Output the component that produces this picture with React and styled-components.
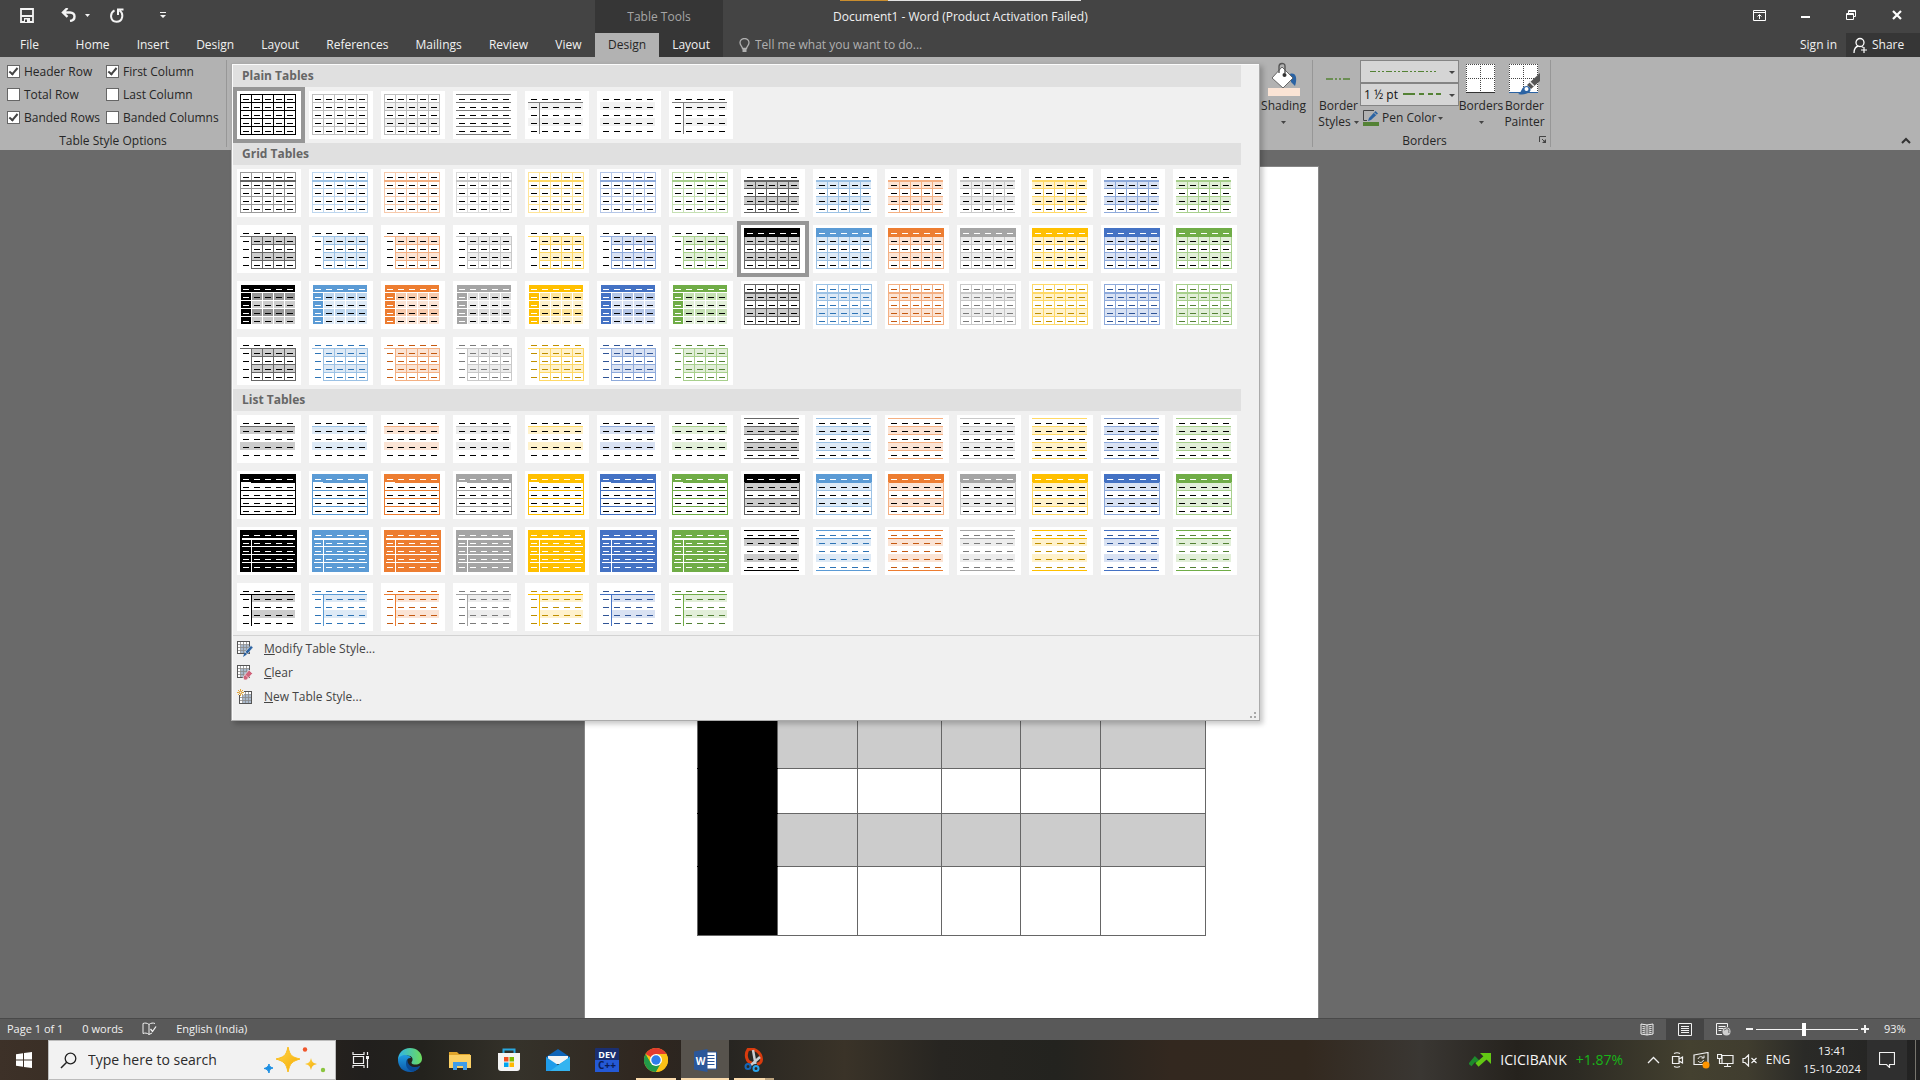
import React from "react";
import styled, { createGlobalStyle, css } from "styled-components";

const GlobalStyle = createGlobalStyle`
  *, *::before, *::after { box-sizing: border-box; }
  html, body { margin: 0; height: 100%; }
  body {
    font-family: "Open Sans", "Noto Sans", sans-serif;
    font-size: 12px;
    line-height: 16px;
    overflow: hidden;
  }
  button, input, select {
    font: inherit;
    color: inherit;
    margin: 0;
    padding: 0;
    border: 0;
    background: none;
    border-radius: 0;
  }
  svg { display: block; flex: none; }
`;

const Window = styled.div`
  display: flex;
  flex-direction: column;
  height: 100vh;
  background: #6a6a6a;
`;

/* ---------- title bar and tabs ---------- */

const TitleBar = styled.header`
  display: flex;
  flex: none;
  background: #444444;
  color: #f1f1f1;
`;

const TitleColumn = styled.div`
  display: flex;
  flex-direction: column;
  flex: ${(p) => (p.$w ? `0 0 ${p.$w}px` : "1")};
  background: ${(p) => (p.$dark ? "#363636" : "transparent")};
`;

const CaptionRow = styled.div`
  display: flex;
  align-items: center;
  height: 33px;
  padding-bottom: 3px;
`;

const TabRow = styled.nav`
  display: flex;
  align-items: stretch;
  height: 24px;
`;

const QuickButton = styled.button`
  display: flex;
  align-items: center;
  justify-content: center;
  gap: 8px;
  width: ${(p) => p.$w || 39}px;
  height: 30px;
`;

const QuickAccess = styled(CaptionRow)`
  padding-left: 8px;
`;

const Tab = styled.button`
  flex: 1 1 auto;
  padding: 0 13px;
  white-space: nowrap;
  font-size: 12px;
  color: ${(p) => (p.$active ? "#262626" : "#f1f1f1")};
  background: ${(p) => (p.$active ? "#b2b2b2" : "transparent")};
`;

const FileTab = styled(Tab)`
  flex: none;
  width: 62px;
  padding: 0 20px;
  text-align: left;
`;

const ToolsTitle = styled(CaptionRow)`
  justify-content: center;
  padding-bottom: 0;
  color: #a6a6a6;
`;

const DocTitle = styled.h1`
  margin: 0 auto 0 110px;
  padding-top: 3px;
  font-size: 12px;
  font-weight: 400;
  line-height: 16px;
  white-space: nowrap;
`;

const Progress = styled.div`
  position: absolute;
  top: 0;
  left: 840px;
  width: 241px;
  height: 1px;
  background: linear-gradient(90deg, #c98d2e 48px, #e2e2e2 48px);
`;

const WindowButton = styled.button`
  display: flex;
  align-items: center;
  justify-content: center;
  width: 46px;
  height: 30px;
`;

const TellMe = styled.label`
  display: flex;
  align-items: center;
  gap: 5px;
  margin-right: auto;
  padding-left: 16px;
`;

const TellInput = styled.input`
  width: 240px;
  outline: 0;
  &::placeholder { color: #b0b0b0; opacity: 1; }
`;

const SignIn = styled.a`
  align-self: center;
  margin-right: 9px;
  color: inherit;
  text-decoration: none;
`;

const Share = styled.button`
  display: flex;
  align-items: center;
  gap: 4px;
  width: 74px;
  padding-left: 7px;
  background: #363636;
`;

/* ---------- ribbon ---------- */

const Ribbon = styled.section`
  display: flex;
  flex: none;
  height: 93px;
  padding: 3px 0;
  background: #b2b2b2;
  color: #262626;
`;

const Group = styled.div`
  display: flex;
  flex-direction: column;
  flex: none;
  width: ${(p) => p.$w}px;
  border-right: 1px solid #979797;
`;

const GroupLabel = styled.div`
  position: relative;
  margin-top: auto;
  padding-right: ${(p) => (p.$launcher ? 14 : 0)}px;
  text-align: center;
  line-height: 12px;
`;

const OptionGrid = styled.div`
  display: grid;
  grid-template-columns: 99px auto;
  grid-auto-rows: 23px;
  justify-content: start;
  padding-left: 7px;
`;

const OptionLabel = styled.label`
  display: flex;
  align-items: center;
  gap: 4px;
  white-space: nowrap;
`;

const CheckBox = styled.input`
  appearance: none;
  display: grid;
  place-items: center;
  flex: none;
  width: 13px;
  height: 13px;
  border: 1px solid #666666;
  background: #ffffff;
  &:checked::after {
    content: "";
    width: 5px;
    height: 9px;
    margin-bottom: 3px;
    border: solid #444444;
    border-width: 0 2px 2px 0;
    transform: rotate(40deg);
  }
`;

const GallerySlot = styled.div`
  position: relative;
  flex: none;
  width: 1033px;
`;

const BigButton = styled.button`
  display: flex;
  flex-direction: column;
  align-items: center;
  width: ${(p) => p.$w}px;
  padding-left: ${(p) => p.$inset || 0}px;
  white-space: nowrap;
`;

const BigIcon = styled.span`
  display: flex;
  align-items: center;
  justify-content: center;
  height: 38px;
`;

const Line = styled.span`
  display: flex;
  align-items: center;
  justify-content: center;
  gap: 3px;
  height: 16px;
`;

const GroupBody = styled.div`
  display: flex;
`;

const PenColumn = styled.div`
  display: flex;
  flex-direction: column;
  width: 99px;
  margin-right: 3px;
`;

const Combo = styled.div`
  display: grid;
  height: 23px;
  border: 1px solid #848484;
  background: #d5d5d5;
  color: #111111;
  & > * { grid-area: 1 / 1; }
  & > svg { pointer-events: none; }
`;

const ComboSelect = styled.select`
  appearance: none;
  width: 100%;
  padding-left: 3px;
  outline: 0;
`;

const PenButton = styled.button`
  display: flex;
  align-items: center;
  gap: 2px;
  height: 24px;
  padding-left: 3px;
  white-space: nowrap;
`;

const Launcher = styled.button`
  position: absolute;
  right: 3px;
  top: 1px;
`;

const Collapse = styled.button`
  align-self: flex-end;
  margin: 0 9px 0 auto;
  height: 14px;
`;

/* ---------- table style gallery ---------- */

const Gallery = styled.div`
  position: absolute;
  z-index: 2;
  top: 3px;
  left: 4px;
  width: 1029px;
  padding: 1px 0 11px 1px;
  border: 1px solid #ababab;
  background: #f0f0f0;
  box-shadow: inset 1px 1px 0 #fbfbfb, 3px 3px 5px rgba(0, 0, 0, 0.22);
  color: #444444;
`;

const GalleryHeading = styled.h2`
  width: 1008px;
  height: 22px;
  margin: 0;
  padding-left: 9px;
  background: #e0e0e0;
  color: #666666;
  font-size: 12px;
  font-weight: 700;
  line-height: 21px;
`;

const Swatches = styled.div`
  display: grid;
  grid-template-columns: repeat(14, 72px);
  grid-auto-rows: 56px;
`;

const Swatch = styled.button`
  border: 4px solid ${(p) => (p.$selected ? "#969696" : "transparent")};
  background: #ffffff padding-box;
`;

const MenuList = styled.ul`
  margin: 0;
  padding: 1px 0 0;
  border-top: 1px solid #d2d2d2;
  list-style: none;
`;

const MenuItem = styled.button`
  display: flex;
  align-items: center;
  gap: 11px;
  width: 100%;
  height: 24px;
  padding-left: 4px;
  text-align: left;
`;

const Grip = styled.span`
  position: absolute;
  right: 3px;
  bottom: 2px;
`;

/* ---------- document ---------- */

const Canvas = styled.main`
  display: flex;
  flex: 1;
  justify-content: center;
  min-height: 0;
  padding: 16px 18px 0 0;
  overflow: hidden;
`;

const Page = styled.article`
  width: 735px;
  padding: 103px 0 0 112px;
  border: 1px solid #868686;
  border-bottom: 0;
  background: #ffffff;
`;

const DocTable = styled.table`
  width: 509px;
  table-layout: fixed;
  border-collapse: collapse;
`;

const Cell = styled.td`
  padding: 0;
  border: 1px solid #666666;
  background: ${(p) => (p.$band ? "#cccccc" : "#ffffff")};
`;

const HeadCell = styled.th`
  padding: 0;
  border: 1px solid #666666;
  border-top-color: #000000;
  border-bottom-color: ${(p) => (p.$last ? "#666666" : "#000000")};
  background: #000000;
`;

const Row = styled.tr`
  height: ${(p) => p.$h}px;
`;

/* ---------- status bar ---------- */

const StatusBar = styled.footer`
  display: flex;
  align-items: center;
  flex: none;
  height: 22px;
  padding: 0 0 1px 7px;
  border-top: 1px solid #494949;
  background: #595959;
  color: #f1f1f1;
  font-size: 11px;
`;

const StatusItem = styled.button`
  flex: none;
  margin-right: ${(p) => (p.$last ? "auto" : "19px")};
  white-space: nowrap;
`;

const ViewButton = styled.button`
  display: flex;
  align-items: center;
  justify-content: center;
  width: 38px;
  height: 21px;
  background: ${(p) => (p.$active ? "#444444" : "transparent")};
`;

const ZoomGroup = styled.div`
  display: flex;
  align-items: center;
  gap: 3px;
  margin-left: 4px;
`;

const ZoomRange = styled.input`
  appearance: none;
  width: 102px;
  height: 13px;
  background: linear-gradient(#f1f1f1, #f1f1f1) center / 100% 1px no-repeat;
  &::-webkit-slider-thumb {
    appearance: none;
    width: 4px;
    height: 13px;
    background: #ffffff;
  }
`;

const ZoomValue = styled.button`
  width: 24px;
  margin: 0 12px 0 15px;
  text-align: left;
`;

/* ---------- taskbar ---------- */

const Taskbar = styled.nav`
  display: flex;
  align-items: stretch;
  flex: none;
  height: 40px;
  color: #f6f6f6;
  background: linear-gradient(90deg, #3d3128 0%, #33291f 10%, #211f1d 19%, #23221d 22%, #35322a 27%, #2f261f 34%, #272521 38%, #3a3328 44%, #272521 49%, #23231f 55%, #33281f 61%, #33291f 68%, #3a3733 74%, #25221d 79%, #2c2a23 82%, #444130 88%, #403d2f 91%, #2a2a27 94%, #222222 100%);
`;

const TaskButton = styled.button`
  position: relative;
  display: flex;
  align-items: center;
  justify-content: center;
  width: ${(p) => p.$w || 49}px;
  background: ${(p) => (p.$active ? "#57534d" : "transparent")};
  ${(p) =>
    p.$running &&
    css`
      &::after {
        content: "";
        position: absolute;
        left: ${p.$active ? 0 : 5}px;
        right: ${p.$active ? 0 : 5}px;
        bottom: 0;
        height: 2px;
        background: ${p.$stacked ? "linear-gradient(90deg, #fbdcae 31px, #bca37e 31px)" : "#fbdcae"};
      }
    `}
`;

const SearchBox = styled.label`
  display: flex;
  align-items: center;
  gap: 11px;
  width: 288px;
  padding: 0 9px 0 11px;
  border: 1px solid #bcbcbc;
  background: #f2f2f2;
  color: #222222;
`;

const SearchInput = styled.input`
  flex: 1;
  min-width: 0;
  font-size: 14px;
  line-height: 20px;
  outline: 0;
  &::placeholder { color: #2b2b2b; opacity: 1; }
`;

const Tray = styled.div`
  display: flex;
  align-items: center;
  margin-left: auto;
`;

const Stock = styled.button`
  display: flex;
  align-items: center;
  gap: 9px;
  margin-right: 18px;
  font-size: 14px;
`;

const Gain = styled.span`
  color: #18b418;
`;

const TrayButton = styled.button`
  display: flex;
  align-items: center;
  justify-content: center;
  width: 24px;
  height: 40px;
`;

const Language = styled.button`
  width: 34px;
  height: 40px;
`;

const Clock = styled.button`
  display: flex;
  flex-direction: column;
  align-items: center;
  gap: 2px;
  width: 70px;
  margin-left: 2px;
  font-size: 11px;
`;

const Notify = styled(TrayButton)`
  width: 40px;
  background: #2f2f2f;
`;

const ShowDesktop = styled.button`
  width: 5px;
  height: 40px;
  margin-left: 8px;
  border-left: 1px solid #77756e;
`;

/* ---------- gallery drawings ---------- */

const THEMES = [
  { name: "Dark", strong: "#000000", mid: "#666666", light: "#999999", pale: "#cccccc", ink: "#000000" },
  { name: "Accent 1", strong: "#5b9bd5", mid: "#9cc2e5", light: "#bdd6ee", pale: "#deeaf6", ink: "#2e74b5" },
  { name: "Accent 2", strong: "#ed7d31", mid: "#f4b083", light: "#f7caac", pale: "#fbe4d5", ink: "#c45911" },
  { name: "Accent 3", strong: "#a5a5a5", mid: "#c9c9c9", light: "#dbdbdb", pale: "#ededed", ink: "#7b7b7b" },
  { name: "Accent 4", strong: "#ffc000", mid: "#ffd966", light: "#ffe599", pale: "#fff2cc", ink: "#bf8f00" },
  { name: "Accent 5", strong: "#4472c4", mid: "#8eaadb", light: "#b4c6e7", pale: "#d9e2f3", ink: "#2f5496" },
  { name: "Accent 6", strong: "#70ad47", mid: "#a8d08d", light: "#c5e0b3", pale: "#e2efd9", ink: "#538135" },
];

const XS = [3, 14, 25, 36, 47, 58];
const YS = [3, 11, 19, 27, 35, 43];
const r = (x, y, w, h, fill) => ({ x, y, w, h, fill });
const hLines = (ys, x, w, c) => ys.map((y) => r(x, y, w, 1, c));
const vLines = (xs, y, h, c) => xs.map((x) => r(x, y, 1, h, c));
const bands = (x, c) => [11, 27].map((y) => r(x, y, 58 - x, 8, c));
const grid = (c) => [...hLines(YS, 3, 56, c), ...vLines(XS, 3, 41, c)];
const innerGrid = (t) => [
  ...bands(14, t.pale),
  ...hLines([11], 3, 12, t.mid),
  ...hLines(YS.slice(1), 14, 45, t.mid),
  ...vLines(XS.slice(1), 11, 33, t.mid),
];

const BLACK = "#000000";
const WHITE = "#ffffff";
const allBlack = () => BLACK;

const STYLES = {
  grid1: { shapes: (t) => [...grid(t.light), r(3, 11, 56, 2, t.mid)] },
  grid2: {
    shapes: (t) => [
      ...bands(3, t.pale),
      ...hLines(YS.slice(2), 3, 55, t.mid),
      ...vLines(XS.slice(1, 5), 11, 33, t.mid),
      r(3, 11, 55, 2, t.mid),
    ],
  },
  grid3: { shapes: innerGrid },
  grid4: {
    shapes: (t) => [...bands(3, t.pale), ...grid(t.mid), r(3, 3, 56, 9, t.strong)],
    ink: (t, row) => (row === 0 ? WHITE : BLACK),
  },
  grid5: {
    shapes: (t) => [
      r(4, 4, 54, 7, t.strong),
      ...YS.slice(1, 5).flatMap((y, i) =>
        XS.slice(0, 5).map((x, c) => r(x + 1, y + 1, 10, 7, c === 0 ? t.strong : i % 2 ? t.pale : t.light))
      ),
    ],
    ink: (t, row, col) => (row === 0 || col === 0 ? WHITE : BLACK),
  },
  grid6: {
    shapes: (t) => [...bands(3, t.pale), ...grid(t.mid), r(3, 11, 56, 2, t.mid)],
    ink: (t) => t.ink,
  },
  grid7: { shapes: innerGrid, ink: (t) => t.ink },
  list1: { shapes: (t) => [...bands(3, t.pale), r(3, 11, 55, 1, t.mid)] },
  list2: { shapes: (t) => [...bands(3, t.pale), ...hLines(YS, 3, 55, t.mid)] },
  list3: {
    shapes: (t) => [
      ...hLines(YS, 3, 56, t.strong),
      ...vLines([3, 58], 3, 41, t.strong),
      r(3, 3, 56, 9, t.strong),
      r(4, 11, 10, 1, WHITE),
    ],
    ink: (t, row) => (row === 0 ? WHITE : BLACK),
  },
  list4: {
    shapes: (t) => [
      ...bands(3, t.pale),
      ...hLines(YS, 3, 56, t.mid),
      ...vLines([3, 58], 3, 41, t.mid),
      r(3, 3, 56, 8, t.strong),
      r(4, 11, 54, 1, t.strong),
    ],
    ink: (t, row) => (row === 0 ? WHITE : BLACK),
  },
  list5: {
    shapes: (t) => [
      r(3, 3, 57, 42, t.strong),
      r(5, 11, 53, 2, WHITE),
      ...hLines([19, 27, 35], 5, 53, WHITE),
      r(14, 13, 1, 32, WHITE),
    ],
    ink: () => WHITE,
  },
  list6: {
    shapes: (t) => [...bands(3, t.pale), ...hLines([3, 11, 43], 3, 55, t.strong)],
    ink: (t) => t.ink,
  },
  list7: {
    shapes: (t) => [...bands(14, t.pale), r(3, 11, 55, 1, t.strong), r(14, 11, 1, 32, t.strong)],
    ink: (t) => t.ink,
  },
};

const GRAY = "#7f7f7f";
const PLAIN = [
  { name: "Table Grid", shapes: grid(BLACK), selected: true },
  { name: "Table Grid Light", shapes: grid("#bfbfbf") },
  { name: "Plain Table 1", shapes: [...bands(3, "#f2f2f2"), ...grid("#bfbfbf")] },
  { name: "Plain Table 2", shapes: hLines(YS, 3, 55, GRAY) },
  { name: "Plain Table 3", shapes: [...bands(3, "#f2f2f2"), r(3, 11, 55, 1, GRAY), r(14, 11, 1, 32, GRAY)] },
  { name: "Plain Table 4", shapes: bands(3, "#f2f2f2") },
  { name: "Plain Table 5", shapes: [...bands(14, "#f2f2f2"), r(3, 11, 55, 1, GRAY), r(14, 11, 1, 32, GRAY)] },
];

const ROWS = [0, 1, 2, 3, 4];

function Thumb({ shapes, ink = allBlack, theme }) {
  return (
    <svg width="64" height="48" shapeRendering="crispEdges" aria-hidden="true">
      {shapes.map((s, i) => (
        <rect key={i} x={s.x} y={s.y} width={s.w} height={s.h} fill={s.fill} />
      ))}
      {ROWS.map((row) =>
        ROWS.map((col) => (
          <rect key={`${row}-${col}`} x={6 + col * 11} y={8 + row * 8} width="6" height="1" fill={ink(theme, row, col)} />
        ))
      )}
    </svg>
  );
}

function StyleGroup({ title, kinds, selected }) {
  return (
    <>
      <GalleryHeading>{title}</GalleryHeading>
      <Swatches>
        {kinds.map((kind) =>
          THEMES.map((theme) => {
            const id = `${kind} ${theme.name}`;
            const style = STYLES[kind];
            return (
              <Swatch key={id} aria-label={id} $selected={id === selected}>
                <Thumb shapes={style.shapes(theme)} ink={style.ink} theme={theme} />
              </Swatch>
            );
          })
        )}
      </Swatches>
    </>
  );
}

/* ---------- small icons ---------- */

const Caret = ({ color = "#444444" }) => (
  <svg width="5" height="3"><path d="M0 0h5L2.5 3z" fill={color} /></svg>
);

const GridIcon = ({ children }) => (
  <svg width="16" height="16" viewBox="0 0 16 16">
    <rect x="0.5" y="0.5" width="12" height="12" fill="#fff" stroke="#555" />
    <path d="M4 4h8v8H4z" fill="#a9b9cc" />
    <path d="M1 3.500h11M1 6.500h11M1 9.500h11M3.500 1v11M6.500 1v11M9.500 1v11" stroke="#8a8a8a" strokeWidth="0.8" />
    {children}
  </svg>
);

const MENU = [
  {
    key: "M",
    rest: "odify Table Style...",
    icon: <GridIcon><path d="M14 4.500 16 6.500 10.500 13 8 11z" fill="#2b63a3" stroke="#f0f0f0" strokeWidth="0.6" /><path d="M7.500 11.500 9.800 13.500 6 16z" fill="#2b63a3" /></GridIcon>,
  },
  {
    key: "C",
    rest: "lear",
    icon: <GridIcon><path d="M12 5 15.500 8.500 9.500 15 7 15 6 12z" fill="#d0647c" stroke="#f0f0f0" strokeWidth="0.7" /><path d="m8 9.500 4 4" stroke="#f0d0d6" strokeWidth="0.8" /></GridIcon>,
  },
  {
    key: "N",
    rest: "ew Table Style...",
    icon: (
      <svg width="16" height="16" viewBox="0 0 16 16">
        <rect x="2.500" y="2.500" width="12" height="12" fill="#fff" stroke="#555" />
        <path d="M6 6h8v8H6z" fill="#a9b9cc" />
        <path d="M3 5.500h11M3 8.500h11M3 11.500h11M5.500 3v11M8.500 3v11M11.500 3v11" stroke="#8a8a8a" strokeWidth="0.8" />
        <path d="M0 0h7v6H0z" fill="#f0f0f0" />
        <path d="M3.500 0v7M0 3.500h7M1 1l5 5M6 1 1 6" stroke="#e0a53c" strokeWidth="1" />
        <circle cx="3.500" cy="3.500" r="1.300" fill="#f0f0f0" stroke="#e0a53c" />
      </svg>
    ),
  },
];

const OPTIONS = [
  ["Header Row", true],
  ["First Column", true],
  ["Total Row", false],
  ["Last Column", false],
  ["Banded Rows", true],
  ["Banded Columns", false],
];

const TABS = ["Home", "Insert", "Design", "Layout", "References", "Mailings", "Review", "View"];

const DOC_ROWS = [45, 45, 45, 45, 45, 45, 45, 45, 45, 45, 48, 45, 53, 69];
const DOC_COLS = [80, 80, 84, 79, 80, 105];

function Header() {
  return (
    <TitleBar>
      <TitleColumn $w={595}>
        <QuickAccess>
          <QuickButton $w={38} aria-label="Save">
            <svg width="14" height="15"><path d="M1 1h12v13H1zM1 8h12" fill="none" stroke="#f4f4f4" strokeWidth="1.800" /><path d="M4 10h6v4H4z" fill="#f4f4f4" /><path d="M5 11.500h2V14H5z" fill="#444" /></svg>
          </QuickButton>
          <QuickButton $w={58} aria-label="Undo">
            <svg width="16" height="14"><path d="M6.500 0 2 4.500l4.500 4.300M2.500 4.500H9c6 0 6 7.500 0 8.500" fill="none" stroke="#f4f4f4" strokeWidth="2.400" /></svg>
            <Caret color="#f4f4f4" />
          </QuickButton>
          <QuickButton $w={26} aria-label="Redo">
            <svg width="14" height="15"><path d="M4.500 2.300C-.5 5-.2 13.500 6.500 13.800c6.500 0 7.500-8.300 3-11.300M8 7V1.500h5.500" fill="none" stroke="#f4f4f4" strokeWidth="2" /></svg>
          </QuickButton>
          <QuickButton $w={66} aria-label="Customize Quick Access Toolbar">
            <svg width="6" height="7"><path d="M0 0h6v1H0zM0 3h6L3 6z" fill="#f4f4f4" /></svg>
          </QuickButton>
        </QuickAccess>
        <TabRow>
          <FileTab>File</FileTab>
          {TABS.map((t) => <Tab key={t}>{t}</Tab>)}
        </TabRow>
      </TitleColumn>
      <TitleColumn $w={128} $dark>
        <ToolsTitle>Table Tools</ToolsTitle>
        <TabRow>
          <Tab $active>Design</Tab>
          <Tab>Layout</Tab>
        </TabRow>
      </TitleColumn>
      <TitleColumn>
        <CaptionRow>
          <DocTitle>Document1 - Word (Product Activation Failed)</DocTitle>
          <WindowButton aria-label="Ribbon Display Options">
            <svg width="13" height="11"><path d="M.5.5h12v10H.5zM.5 2.500h12" fill="none" stroke="#fff" /><path d="M6.500 9V5M4.500 6.500l2-2 2 2" fill="none" stroke="#fff" /></svg>
          </WindowButton>
          <WindowButton aria-label="Minimize"><svg width="9" height="6"><path d="M0 4h9v2H0z" fill="#fff" /></svg></WindowButton>
          <WindowButton aria-label="Restore">
            <svg width="10" height="10"><path d="M.5 3.500h7v6h-7zM.5 4.500h7M2.500 3V.5h7v6H8M2.500 1.500h7" fill="none" stroke="#fff" /></svg>
          </WindowButton>
          <WindowButton aria-label="Close"><svg width="10" height="10"><path d="m1 1 8 8M9 1 1 9" stroke="#fff" strokeWidth="2.200" /></svg></WindowButton>
        </CaptionRow>
        <TabRow>
          <TellMe>
            <svg width="11" height="15"><path d="M3.500 10.500C3.500 8.500 1 7.500 1 4.800a4.500 4.300 0 0 1 9 0c0 2.700-2.500 3.700-2.500 5.700z" fill="none" stroke="#b0b0b0" strokeWidth="1.300" /><path d="M3.500 11h4v3h-4z" fill="#b0b0b0" /></svg>
            <TellInput aria-label="Tell me" placeholder="Tell me what you want to do..." />
          </TellMe>
          <SignIn href="#signin">Sign in</SignIn>
          <Share>
            <svg width="15" height="17"><circle cx="7" cy="5.500" r="4" fill="none" stroke="#fff" strokeWidth="1.300" /><path d="M1 16c0-4 2-6.500 4.500-7M8.500 9.500l2 1" fill="none" stroke="#fff" strokeWidth="1.300" /><path d="M11 10v6M8 13h6" stroke="#fff" strokeWidth="1.200" /></svg>
            Share
          </Share>
        </TabRow>
      </TitleColumn>
      <Progress />
    </TitleBar>
  );
}

function StyleGallery() {
  return (
    <Gallery>
      <GalleryHeading>Plain Tables</GalleryHeading>
      <Swatches>
        {PLAIN.map((p) => (
          <Swatch key={p.name} aria-label={p.name} $selected={p.selected}><Thumb shapes={p.shapes} /></Swatch>
        ))}
      </Swatches>
      <StyleGroup title="Grid Tables" kinds={["grid1", "grid2", "grid3", "grid4", "grid5", "grid6", "grid7"]} selected="grid4 Dark" />
      <StyleGroup title="List Tables" kinds={["list1", "list2", "list3", "list4", "list5", "list6", "list7"]} />
      <MenuList>
        {MENU.map((m) => (
          <li key={m.key}>
            <MenuItem>{m.icon}<span><u>{m.key}</u>{m.rest}</span></MenuItem>
          </li>
        ))}
      </MenuList>
      <Grip><svg width="6" height="6"><path d="M4 0h2v2H4zM0 4h2v2H0zM4 4h2v2H4z" fill="#a8a8a8" /></svg></Grip>
    </Gallery>
  );
}

const BorderSheet = ({ children, w = 30 }) => (
  <svg width={w} height="32">
    <path d="M0 1h29v28H0z" fill="#fff" />
    <path d="M0 1.500h29M0 15.500h29M.5 1v28M14.500 1v28M28.500 1v28" stroke="#444" strokeDasharray="1 1" />
    {children || <path d="M0 29.500h29" stroke="#333" />}
  </svg>
);

function RibbonBar() {
  return (
    <Ribbon>
      <Group $w={227}>
        <OptionGrid>
          {OPTIONS.map(([label, on]) => (
            <OptionLabel key={label}><CheckBox type="checkbox" defaultChecked={on} />{label}</OptionLabel>
          ))}
        </OptionGrid>
        <GroupLabel>Table Style Options</GroupLabel>
      </Group>
      <GallerySlot><StyleGallery /></GallerySlot>
      <Group $w={53}>
        <BigButton $w={47}>
          <BigIcon>
            <svg width="34" height="34" viewBox="0 0 34 34">
              <path d="M23 12c5-2 8 3 5 12l-4-4z" fill="#2b63a3" />
              <path d="m15 5 11 11-10 10L5 16z" fill="#fff" stroke="#666" />
              <path d="M12 11V4.500C12 .5 18 .5 18 4v7" fill="none" stroke="#555" strokeWidth="1.400" />
              <circle cx="17.500" cy="13" r="2" fill="#333" />
              <path d="M1 26h32v8H1z" fill="#fbe4d5" />
            </svg>
          </BigIcon>
          <Line>Shading</Line>
          <Line><Caret /></Line>
        </BigButton>
      </Group>
      <Group $w={238}>
        <GroupBody>
          <BigButton $w={47} $inset={4}>
            <BigIcon><svg width="26" height="2"><path d="M0 1h26" stroke="#548235" strokeWidth="1.500" strokeDasharray="7 2 2 2 2 2" /></svg></BigIcon>
            <Line>Border</Line>
            <Line>Styles<Caret /></Line>
          </BigButton>
          <PenColumn>
            <Combo>
              <ComboSelect aria-label="Line style"><option aria-label="Dash dot dot" /></ComboSelect>
              <svg width="97" height="21"><path d="M9 10.500h66" stroke="#548235" strokeWidth="1" strokeDasharray="6 2 2 2 2 2" /><path d="M88 10h6l-3 3z" fill="#444" /></svg>
            </Combo>
            <Combo>
              <ComboSelect aria-label="Line weight"><option>1 ½ pt</option></ComboSelect>
              <svg width="97" height="21"><path d="M42 10h12M58 10h5M67 10h5M75 10h5" stroke="#548235" strokeWidth="2" /><path d="M88 10h6l-3 3z" fill="#444" /></svg>
            </Combo>
            <PenButton>
              <svg width="17" height="16"><path d="M11 .5H.5v10H4" fill="none" stroke="#444" /><path d="M12.500 1 15 3.500 8 10l-3 1 1-3z" fill="#2b63a3" /><path d="m11 2.500 2.500 2.500" stroke="#b2b2b2" /><path d="M0 12h16v4H0z" fill="#548235" /></svg>
              Pen Color<Caret />
            </PenButton>
          </PenColumn>
          <BigButton $w={38}>
            <BigIcon><BorderSheet /></BigIcon>
            <Line>Borders</Line>
            <Line><Caret /></Line>
          </BigButton>
          <BigButton $w={49}>
            <BigIcon>
              <BorderSheet w={32}>
                <path d="M0 29.500h29" stroke="#2b63a3" />
                <path d="M31 10v8l-9 8-4-4z" fill="#555" />
                <path d="m20 18 5 5" stroke="#e8e8e8" strokeWidth="1.500" />
                <path d="M9 31c4-1 3-8 9-8 4 1 5 5 1 7-3 1.500-6 2-10 1z" fill="#2b63a3" />
                <circle cx="17.500" cy="26" r="2" fill="#fff" />
              </BorderSheet>
            </BigIcon>
            <Line>Border</Line>
            <Line>Painter</Line>
          </BigButton>
        </GroupBody>
        <GroupLabel $launcher>
          Borders
          <Launcher aria-label="Borders and Shading">
            <svg width="8" height="8"><path d="M.5 6V.5H7M3 3l3 3" fill="none" stroke="#444" /><path d="M7 3v4H3z" fill="#444" /></svg>
          </Launcher>
        </GroupLabel>
      </Group>
      <Collapse aria-label="Collapse the Ribbon"><svg width="10" height="7"><path d="m1 6 4-4 4 4" fill="none" stroke="#333" strokeWidth="2" /></svg></Collapse>
    </Ribbon>
  );
}

function Document() {
  return (
    <Canvas>
      <Page>
        <DocTable>
          <colgroup>{DOC_COLS.map((w, i) => <col key={i} style={{ width: w }} />)}</colgroup>
          <tbody>
            {DOC_ROWS.map((h, i) => (
              <Row key={i} $h={h}>
                <HeadCell scope="row" $last={i === DOC_ROWS.length - 1} />
                {DOC_COLS.slice(1).map((_, c) => <Cell key={c} $band={i % 2 === 0} />)}
              </Row>
            ))}
          </tbody>
        </DocTable>
      </Page>
    </Canvas>
  );
}

function Status() {
  return (
    <StatusBar>
      <StatusItem>Page 1 of 1</StatusItem>
      <StatusItem>0 words</StatusItem>
      <StatusItem aria-label="Proofing">
        <svg width="15" height="14"><path d="M7 2.500C5 .8 3 .8 1 1.500v10c2-.7 4-.7 6 1zM7 2.500C9 .8 11 .8 13 1.500M7 12.500l3-1.500" fill="none" stroke="#f1f1f1" /><path d="m8.500 7 2 2.500L14 4.500" fill="none" stroke="#f1f1f1" strokeWidth="1.300" /></svg>
      </StatusItem>
      <StatusItem $last>English (India)</StatusItem>
      <ViewButton aria-label="Read Mode">
        <svg width="14" height="13"><path d="M7 2 1 1v10l6 1 6-1V1zM7 2v10M2.500 3.500l3 .5M2.500 5.500l3 .5M2.500 7.500l3 .5M2.500 9.500l3 .5M11.500 3.500l-3 .5M11.500 5.500l-3 .5M11.500 7.500l-3 .5M11.500 9.500l-3 .5" fill="none" stroke="#f1f1f1" /></svg>
      </ViewButton>
      <ViewButton $active aria-label="Print Layout">
        <svg width="14" height="13"><path d="M.5.5h13v12H.5zM3 3.500h8M3 5.500h8M3 7.500h8M3 9.500h8" fill="none" stroke="#f1f1f1" /></svg>
      </ViewButton>
      <ViewButton aria-label="Web Layout">
        <svg width="15" height="13"><path d="M6 11.500H.5V.5h11V4M2.500 3.500h7M2.500 5.500h5M2.500 7.500h3" fill="none" stroke="#f1f1f1" /><circle cx="10.500" cy="8.500" r="4" fill="#cfcfcf" /><path d="M8 7c2 0 2-2 4-1s0 2 1 4" fill="none" stroke="#666" /></svg>
      </ViewButton>
      <ZoomGroup>
        <button aria-label="Zoom Out"><svg width="7" height="8"><path d="M0 3h7v2H0z" fill="#f1f1f1" /></svg></button>
        <ZoomRange type="range" min="10" max="190" defaultValue="94" aria-label="Zoom" />
        <button aria-label="Zoom In"><svg width="8" height="8"><path d="M0 3h8v2H0zM3 0h2v8H3z" fill="#f1f1f1" /></svg></button>
      </ZoomGroup>
      <ZoomValue>93%</ZoomValue>
    </StatusBar>
  );
}

function TaskbarRow() {
  return (
    <Taskbar>
      <TaskButton $w={48} aria-label="Start">
        <svg width="16" height="16"><path d="M0 2.300 7 1.300v6.200H0zM8 1.100 16 0v7.500H8zM0 8.500h7v6.200l-7-1zM8 8.500h8V16l-8-1.100z" fill="#fff" /></svg>
      </TaskButton>
      <SearchBox>
        <svg width="17" height="17"><circle cx="10.500" cy="6.500" r="5.300" fill="none" stroke="#222" strokeWidth="1.300" /><path d="M6.700 10.300 1 16" stroke="#222" strokeWidth="1.500" /></svg>
        <SearchInput aria-label="Search" placeholder="Type here to search" />
        <svg width="62" height="28" viewBox="0 0 62 26">
          <defs><linearGradient id="gold" x1="0" y1="0" x2="1" y2="1"><stop offset="0" stopColor="#ffd84d" /><stop offset="1" stopColor="#f4a800" /></linearGradient></defs>
          <path d="M24 0c2 9 4 10 12 12-8 2.500-10 4-12 13-2-9-4-10.500-12-13 8-2 10-3 12-12z" fill="url(#gold)" stroke="#fbbd1c" strokeLinejoin="round" />
          <path d="M47 11c1 4 2 5 6 6-4 1-5 2-6 6-1-4-2-5-6-6 4-1 5-2 6-6z" fill="url(#gold)" />
          <path d="M5 17c.5 2.500 1 3 4 4-3 1-3.500 1.500-4 5-1-3-2-4-5-4.500 3-1 4-1.500 5-4.500z" fill="#1c8fe3" stroke="#1c8fe3" />
          <circle cx="41" cy="2.500" r="2.200" fill="#f0562b" /><circle cx="59" cy="23" r="2.200" fill="#8bc53f" />
        </svg>
      </SearchBox>
      <TaskButton aria-label="Task View">
        <svg width="17" height="16"><path d="M1.500 4.500h10v7h-10zM1 0v2.500h11V0M1 16v-2.500h11V16M15.500 0v3M15.500 7v9" fill="none" stroke="#f1f1f1" strokeWidth="1.200" /><path d="M14 4h3v3h-3z" fill="#f1f1f1" /></svg>
      </TaskButton>
      <TaskButton $w={50} aria-label="Edge">
        <svg width="24" height="24" viewBox="0 0 24 24">
          <defs>
            <linearGradient id="edgeA" x1="0" y1="0" x2="1" y2="0"><stop offset="0" stopColor="#2fb4e8" /><stop offset="1" stopColor="#6ddc5c" /></linearGradient>
            <linearGradient id="edgeB" x1="0" y1="0" x2="0" y2="1"><stop offset="0" stopColor="#1f9be0" /><stop offset="1" stopColor="#0d59a8" /></linearGradient>
          </defs>
          <path d="M0 12C0 5 5 0 12 0s12 5 12 10.500c0 4-3 6-6.500 6-4 0-4.500-1.500-3.500-3C15.500 11 14 7.500 9.500 7.500 4 7.500 0 11 0 14z" fill="url(#edgeA)" />
          <path d="M0 12c0-3 4-5.500 8-5 2.500.3 4.500 1.500 5.200 3.200C9 9.500 8 13 9.500 16c2 3.500 8 5 12.500 2-2 4-6 6-10 6C5 24 0 19 0 12z" fill="url(#edgeB)" />
          <path d="M9.500 11c-3 4-1.500 11 5 12.700 3-.5 6-2.500 7.500-5.700-5 2.500-13 1-12.500-7z" fill="#0a4a94" />
        </svg>
      </TaskButton>
      <TaskButton aria-label="File Explorer">
        <svg width="22" height="19"><path d="M0 1h8l2 2h11v4H0z" fill="#e0a52c" /><path d="M0 4h22v13H0z" fill="#fbd065" /><path d="M4 11h14v8h-4v-4H8v4H4z" fill="#3f9ce8" /></svg>
      </TaskButton>
      <TaskButton aria-label="Microsoft Store">
        <svg width="24" height="24"><path d="M6.500 6V1.500h11V6" fill="none" stroke="#29a8e0" strokeWidth="2" /><path d="M1 5h22v15c0 2-1 3-3 3H4c-2 0-3-1-3-3z" fill="#f4f4f4" /><path d="M7 9h4.500v4.500H7z" fill="#f25022" /><path d="M12.500 9H17v4.500h-4.500z" fill="#7fba00" /><path d="M7 14.500h4.500V19H7z" fill="#00a4ef" /><path d="M12.500 14.500H17V19h-4.500z" fill="#ffb900" /></svg>
      </TaskButton>
      <TaskButton aria-label="Mail">
        <svg width="24" height="22"><path d="M0 8 12 0l12 8v4H0z" fill="#0f64b8" /><path d="M2 7h20v8H2z" fill="#f4f4f4" /><path d="M0 8l12 8 12-8v14H0z" fill="#1f9cea" /><path d="M24 8v14H4z" fill="#34b4f0" /></svg>
      </TaskButton>
      <TaskButton aria-label="Dev-C++">
        <svg width="24" height="24" viewBox="0 0 24 24"><rect width="24" height="24" rx="1" fill="#1b2f70" /><rect y="12" width="24" height="12" fill="#2459d6" /><text x="12" y="10" textAnchor="middle" fontFamily="Open Sans, sans-serif" fontWeight="700" fontSize="9" fill="#fff">DEV</text><text x="12" y="21" textAnchor="middle" fontFamily="Open Sans, sans-serif" fontWeight="700" fontSize="10" fill="#0b1c55">C++</text></svg>
      </TaskButton>
      <TaskButton $w={50} $running aria-label="Chrome">
        <svg width="24" height="24" viewBox="0 0 24 24">
          <circle cx="12" cy="12" r="12" fill="#fbc116" />
          <path d="M12 12 1.600 6A12 12 0 0 1 22.400 6H12z" fill="#e33b2e" />
          <path d="M1.600 6A12 12 0 0 0 12 24l5.200-9L12 12 6.800 15z" fill="#229a48" />
          <path d="M12 6h10.400A12 12 0 0 1 12 24l5.200-9z" fill="#fbc116" />
          <circle cx="12" cy="12" r="6" fill="#fff" /><circle cx="12" cy="12" r="4.700" fill="#2f7de9" />
        </svg>
      </TaskButton>
      <TaskButton $w={48} $running $active aria-label="Word">
        <svg width="23" height="23" viewBox="0 0 23 23"><path d="M12 3h10.500v17H12z" fill="#fff" stroke="#2b579a" /><path d="M13 6.500h7.500M13 9.500h7.500M13 12.500h7.500M13 15.500h7.500" stroke="#2b579a" /><path d="m0 2.500 13.500-2.500v23L0 20.500z" fill="#2b579a" /><text x="6.500" y="15.500" textAnchor="middle" fontFamily="Open Sans, sans-serif" fontWeight="700" fontSize="10" fill="#fff">W</text></svg>
      </TaskButton>
      <TaskButton $w={50} $running $stacked aria-label="Snipping Tool">
        <svg width="20" height="24"><path d="M8 15C2 14 1 6 4 1.500 10-.5 17 4 17.500 11c.2 3-2 5-4.500 5" fill="none" stroke="#d83b0e" strokeWidth="3" /><path d="m9 2 2.500 14M16 9l-9 8" stroke="#c9cdd2" strokeWidth="2.500" /><circle cx="4" cy="18.500" r="2.500" fill="none" stroke="#1766b5" strokeWidth="2" /><circle cx="12" cy="20.500" r="2.500" fill="none" stroke="#2aa3ea" strokeWidth="2" /></svg>
      </TaskButton>
      <Tray>
        <Stock>
          <svg width="22" height="14"><path d="m1 12 5-6 5 5" fill="none" stroke="#1d8a2c" strokeWidth="4" /><path d="m8 12 9-8" stroke="#63c814" strokeWidth="4.500" /><path d="M11 0h11v11z" fill="#63c814" /></svg>
          ICICIBANK<Gain>+1.87%</Gain>
        </Stock>
        <TrayButton aria-label="Show hidden icons"><svg width="13" height="8"><path d="m1 7 5.500-5.500L12 7" fill="none" stroke="#f1f1f1" strokeWidth="1.300" /></svg></TrayButton>
        <TrayButton aria-label="Meet Now"><svg width="13" height="16"><path d="M1.500 4.500h6.500v7H1.500zM8 7l3.500-2v6L8 9M3 1.500C5 .5 7 .5 9 1.500M3 14.500c2 1 4 1 6 0" fill="none" stroke="#f1f1f1" strokeWidth="1.200" /></svg></TrayButton>
        <TrayButton aria-label="Update"><svg width="17" height="17"><path d="m1 3 14-2.500v12H1z" fill="none" stroke="#f1f1f1" strokeWidth="1.200" /><path d="M5 7c1-3 4-3 5.500-1M11 3.500V6H8.500M10.500 8c-1 3-4 3-5.500 1" fill="none" stroke="#f1f1f1" /><circle cx="13" cy="13" r="3.500" fill="#ff9500" /></svg></TrayButton>
        <TrayButton aria-label="Network"><svg width="17" height="15"><path d="M5 2.500h11v8H5zM10.500 10.500v3M7 13.500h7M.5 1.500h4v4h-4zM2.500 5.500v5H5" fill="none" stroke="#f1f1f1" strokeWidth="1.200" /></svg></TrayButton>
        <TrayButton aria-label="Volume"><svg width="15" height="13"><path d="M1 4.500h2L6.500 1v11L3 8.500H1zM9.500 4l5 5M14.500 4l-5 5" fill="none" stroke="#f1f1f1" strokeWidth="1.200" /></svg></TrayButton>
        <Language>ENG</Language>
        <Clock><span>13:41</span><span>15-10-2024</span></Clock>
        <Notify aria-label="Notifications"><svg width="16" height="16"><path d="M.5.5h15v12h-5v3l-3-3h-7z" fill="none" stroke="#f1f1f1" strokeWidth="1.200" /></svg></Notify>
        <ShowDesktop aria-label="Show desktop" />
      </Tray>
    </Taskbar>
  );
}

export default function App() {
  return (
    <Window>
      <GlobalStyle />
      <Header />
      <RibbonBar />
      <Document />
      <Status />
      <TaskbarRow />
    </Window>
  );
}
